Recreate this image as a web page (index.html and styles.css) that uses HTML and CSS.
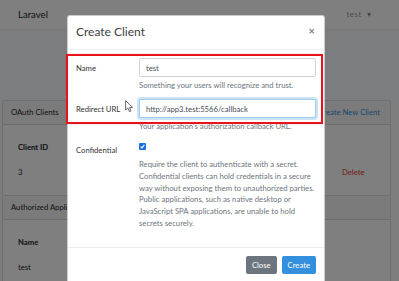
FILE: index.html
```html
<!DOCTYPE html>
<html>
<head>
<meta charset="utf-8">
<link rel="stylesheet" href="styles.css">
</head>
<body>
<div class="page">
  <nav class="navbar">
    <span class="brand">Laravel</span>
    <span class="user">test <span class="caret">&#9662;</span></span>
  </nav>
  <main class="main">
    <div class="card">
      <div class="card-header">
        <span>OAuth Clients</span>
        <a class="action-link">Create New Client</a>
      </div>
      <div class="card-body">
        <div class="table clients">
          <div class="th">Client ID</div><div class="th"></div><div class="th"></div>
          <div class="td">3</div><div class="td"></div><div class="td danger">Delete</div>
        </div>
      </div>
    </div>
    <div class="card card-next">
      <div class="card-header">
        <span>Authorized Applications</span>
      </div>
      <div class="card-body">
        <div class="table apps">
          <div class="th">Name</div><div class="th"></div>
          <div class="td">test</div><div class="td"></div>
        </div>
      </div>
    </div>
  </main>
</div>

<div class="backdrop"></div>

<div class="modal">
  <div class="modal-header">
    <h4 class="modal-title">Create Client</h4>
    <span class="close">&times;</span>
  </div>
  <div class="modal-body">
    <div class="form-group">
      <label class="col-label">Name</label>
      <div class="col-field">
        <input class="form-control" type="text" value="test" readonly>
        <span class="form-text">Something your users will recognize and trust.</span>
      </div>
    </div>
    <div class="form-group">
      <label class="col-label">Redirect URL</label>
      <div class="col-field">
        <input class="form-control focused" type="text" value="http://app3.test:5566/callback" readonly>
        <span class="form-text">Your application's authorization callback URL.</span>
      </div>
    </div>
    <div class="form-group last">
      <label class="col-label">Confidential</label>
      <div class="col-field">
        <div class="checkbox">
          <svg class="check" width="7" height="7" viewBox="0 0 7 7"><rect x="0" y="0" width="7" height="7" rx="1" fill="#1a6fe0"/><path d="M1.6 3.6 L2.9 4.9 L5.4 1.9" fill="none" stroke="#fff" stroke-width="1.1"/></svg>
        </div>
        <p class="form-text para">Require the client to authenticate with a secret.<br>Confidential clients can hold credentials in a secure<br>way without exposing them to unauthorized parties.<br>Public applications, such as native desktop or<br>JavaScript SPA applications, are unable to hold<br>secrets securely.</p>
      </div>
    </div>
  </div>
  <div class="modal-footer">
    <button class="btn btn-secondary">Close</button>
    <button class="btn btn-primary">Create</button>
  </div>
</div>

<div class="highlight"></div>

<svg class="cursor" width="9" height="13" viewBox="0 0 9 13"><path d="M0.6 0.6 L0.6 10 L2.9 7.9 L4.4 11.6 L6 11 L4.5 7.4 L7.6 7.4 Z" fill="#fff" stroke="#444" stroke-width="0.8" stroke-linejoin="round"/></svg>
</body>
</html>
```

FILE: styles.css
```css
* { box-sizing: border-box; }
html, body {
  margin: 0;
  width: 399px;
  height: 281px;
  overflow: hidden;
}
body {
  font-family: "Lato", "Noto Sans", sans-serif;
  font-size: 7.7px;
  line-height: 1.6;
  color: #212529;
  background: #f8fafc;
  position: relative;
}
.navbar {
  height: 29px;
  background: #fff;
  box-shadow: 0 1px 2px rgba(0,0,0,.06);
  display: flex;
  align-items: center;
  justify-content: space-between;
  padding: 0 27px 0 18px;
}
.brand { font-size: 9.6px; }
.user { color: rgba(0,0,0,.45); letter-spacing: 0.6px; }
.caret { margin-left: 3px; }
.main {
  padding: 71px 8px 0 2px;
}
.card {
  background: #fff;
  border: 1px solid rgba(0,0,0,.125);
  border-radius: 2px;
}
.card-next { border-top: 0; border-radius: 0; }
.card-header {
  height: 24px;
  background: rgba(0,0,0,.03);
  border-bottom: 1px solid rgba(0,0,0,.125);
  display: flex;
  align-items: center;
  justify-content: space-between;
  padding: 0 10px 0 8px;
}
.action-link { color: #3490dc; }
.card-body { padding: 10px 10px 11px 9px; }
.table {
  display: grid;
  grid-auto-rows: 24.5px;
  align-items: center;
}
.clients { grid-template-columns: 60px 1fr 38px; }
.apps { grid-template-columns: 60px 1fr; }
.th, .td { padding-left: 6px; white-space: nowrap; }
.th { font-weight: 700; }
.danger { color: #e3342f; padding-left: 0; }

.backdrop {
  position: absolute;
  inset: 0;
  background: rgba(0,0,0,.5);
}

.modal {
  position: absolute;
  left: 67px;
  top: 15px;
  width: 258px;
  background: #fff;
  border: 1px solid rgba(0,0,0,.2);
  border-radius: 3px;
}
.modal-header {
  height: 34px;
  border-bottom: 1px solid #e9ecef;
  display: flex;
  align-items: center;
  justify-content: space-between;
  padding: 0 8px 0 8px;
}
.modal-title {
  margin: 0;
  font-size: 12px;
  font-weight: 400;
  line-height: 1.2;
  color: #3a3f44;
}
.close {
  font-size: 11px;
  font-weight: 700;
  line-height: 1;
  color: #000;
  opacity: .5;
  margin-top: -4px;
  margin-right: 1px;
}
.modal-body { padding: 8px 8px 8px 8px; }
.form-group {
  display: grid;
  grid-template-columns: 63px 1fr;
  margin-bottom: 8px;
}
.form-group.last { margin-bottom: 9px; }
.col-label { padding-top: 4px; line-height: 12px; color: #333; }
.col-field { display: flex; flex-direction: column; }
.form-control {
  display: block;
  width: 100%;
  height: 19px;
  margin: 0;
  border: 1px solid #ced4da;
  border-radius: 2px;
  padding: 0 6px;
  font-family: inherit;
  font-size: 7.7px;
  color: #495057;
  background: #fff;
  outline: none;
}
.form-control.focused {
  border-color: #a1cbef;
  box-shadow: 0 0 0 2px rgba(52,144,220,.25);
}
.form-text {
  margin-top: 2px;
  line-height: 12px;
  color: #6c757d;
}
.checkbox { height: 19px; padding-top: 3px; }
.check { display: block; }
.para {
  margin: 0;
  line-height: 11.8px;
  white-space: nowrap;
}
.modal-footer {
  border-top: 1px solid #e9ecef;
  padding: 8px 8px 8px 8px;
  display: flex;
  justify-content: flex-end;
  gap: 5px;
}
.btn {
  height: 18px;
  border: 0;
  border-radius: 2px;
  padding: 0 6px;
  font-family: inherit;
  font-size: 7.7px;
  color: #fff;
}
.btn-secondary { background: #6c757d; }
.btn-primary { background: #3490dc; }

.highlight {
  position: absolute;
  left: 66px;
  top: 54px;
  width: 257px;
  height: 70px;
  border: 2px solid #e8141b;
  box-shadow: 0 0 1px rgba(200,0,0,.4);
}
.cursor {
  position: absolute;
  left: 125px;
  top: 100px;
}
```
